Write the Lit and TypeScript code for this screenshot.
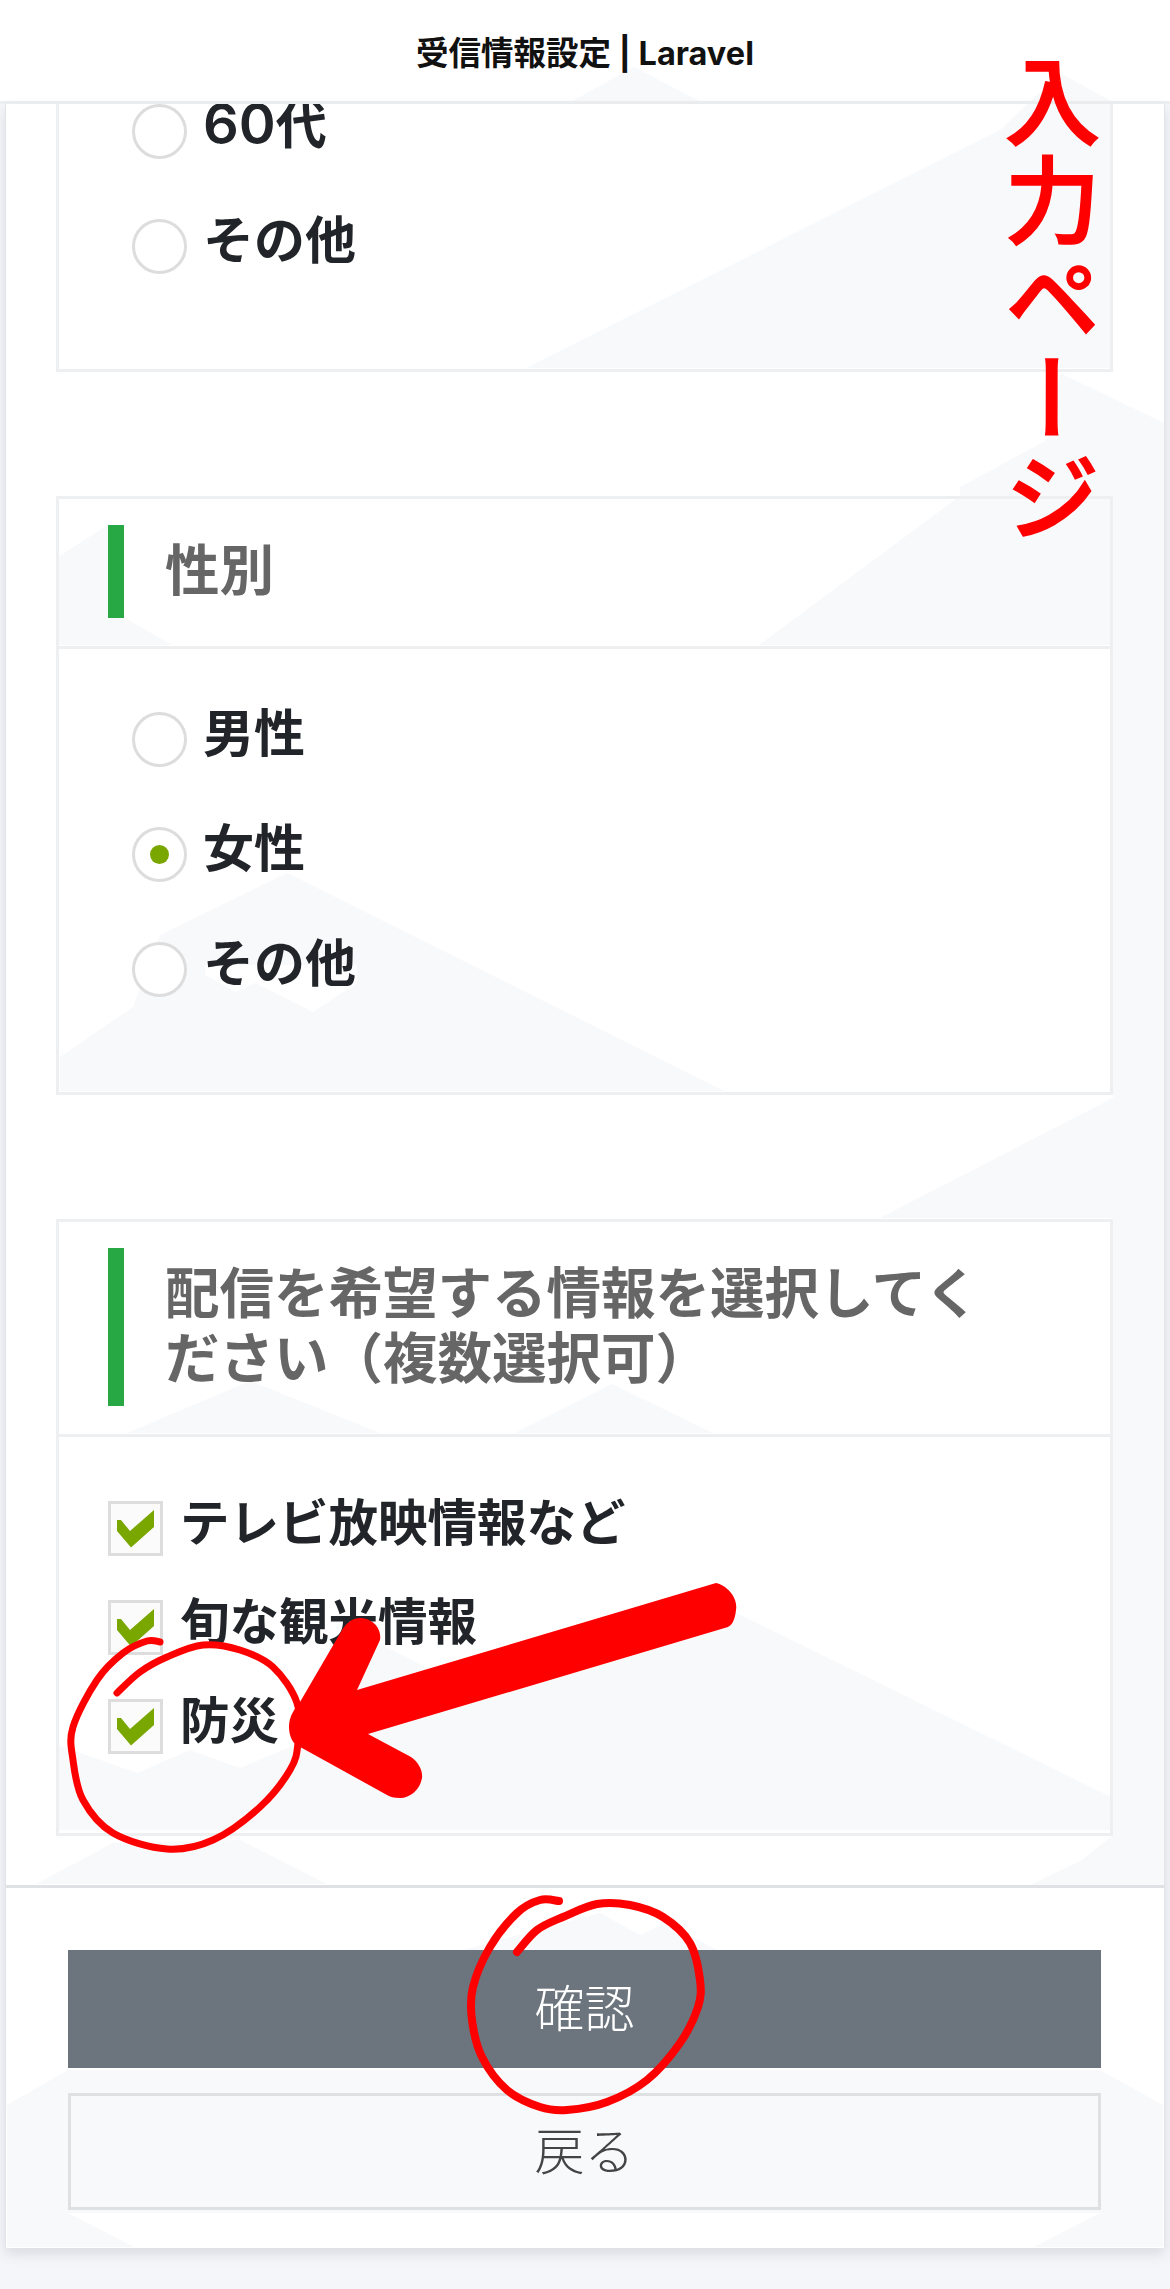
import { LitElement, html, css, svg } from "lit";
import { customElement } from "lit/decorators.js";

const SHAPES: string[] = [
  "567,104 634,67 705,104",
  "526,368 1000,130 1060,73 1113,102 1113,368",
  "960,487 1047,440 1060,373 1164,423 1164,1060 1113,1098 880,1218 1113,1218 1113,1094 1113,496 960,496",
  "759,645 960,496 1113,496 1113,645",
  "58,645 58,557 108,525 108,617 123,617 172,645",
  "60,1091 60,1057 133,1007 160,935 287,873 724,1091",
  "880,1218 1113,1098 1164,1060 1164,1885 1030,1885 1082,1860 1113,1835 1113,1218",
  "127,1433 250,1381 380,1433",
  "515,1433 612,1384 713,1433",
  "58,1830 58,1745 137,1773 190,1750 240,1768 295,1745 340,1700 379,1643 450,1680 720,1605 1111,1797 1111,1830",
  "36,1884 113,1843 240,1840 327,1884",
  "463,1950 600,1913 640,1935 667,1923 717,1950",
  "7,2105 68,2070 1100,2070 1163,2105 1163,2247 1034,2247 1100,2213 68,2213 134,2247 7,2247",
];

const HALO = "205,965 357,965 357,983 313,1012 255,983 236,992 205,975";

const RING_A: number[][] = [
  [160, 1642], [147, 1641], [123, 1653], [97, 1680], [73, 1727], [73, 1760], [83, 1800],
  [113, 1833], [167, 1849], [213, 1840], [260, 1807], [290, 1770], [298, 1743], [297, 1703],
  [273, 1667], [240, 1650], [203, 1645], [167, 1657], [140, 1672], [117, 1693],
];

const RING_B: number[][] = [
  [559, 1901], [540, 1900], [517, 1913], [490, 1947], [473, 1987], [472, 2020], [482, 2057],
  [507, 2090], [540, 2107], [567, 2110], [607, 2102], [647, 2080], [680, 2043], [698, 2007],
  [700, 1980], [690, 1943], [663, 1917], [630, 1905], [597, 1904], [563, 1917], [537, 1930], [517, 1952],
];

function smooth(pts: number[][]): string {
  let d = `M${pts[0][0]} ${pts[0][1]}`;
  for (let i = 0; i < pts.length - 1; i++) {
    const p0 = pts[Math.max(i - 1, 0)];
    const p1 = pts[i];
    const p2 = pts[i + 1];
    const p3 = pts[Math.min(i + 2, pts.length - 1)];
    const c1x = p1[0] + (p2[0] - p0[0]) / 6;
    const c1y = p1[1] + (p2[1] - p0[1]) / 6;
    const c2x = p2[0] - (p3[0] - p1[0]) / 6;
    const c2y = p2[1] - (p3[1] - p1[1]) / 6;
    d += ` C${c1x} ${c1y} ${c2x} ${c2y} ${p2[0]} ${p2[1]}`;
  }
  return d;
}

@customElement("app-root")
export class AppRoot extends LitElement {
  static styles = css`
    :host {
      display: block;
      position: relative;
      width: 1170px;
      height: 2289px;
      overflow: hidden;
      background: #f5f6fa;
      font-family: "Noto Sans CJK JP", sans-serif;
      color: #212529;
    }
    .backdrop,
    .marks {
      position: absolute;
      left: 0;
      top: 0;
      width: 1170px;
      height: 2289px;
    }
    .marks {
      z-index: 3;
      pointer-events: none;
    }
    .stack {
      position: relative;
      z-index: 1;
      display: flex;
      flex-direction: column;
    }
    header {
      height: 101px;
      box-sizing: content-box;
      border-bottom: 3px solid #eeeff1;
      display: flex;
      align-items: center;
      justify-content: center;
      font: 700 32.5px "Inter", "Noto Sans CJK JP", sans-serif;
      color: #111;
    }
    .panel {
      margin: 0 5px;
      height: 2144px;
      box-sizing: border-box;
      border: 1px solid #e3e4e8;
      border-top: 0;
      border-bottom: 0;
      box-shadow: 0 6px 12px rgba(60, 64, 80, 0.14);
      display: flex;
      flex-direction: column;
      overflow: hidden;
    }
    .main {
      padding: 0 51px 0 50px;
      display: flex;
      flex-direction: column;
      gap: 124px;
    }
    .card {
      border: 3px solid #eeeff1;
    }
    .card.cut {
      border-top: 0;
    }
    .head {
      padding: 26px 48px 28px 49px;
      border-bottom: 3px solid #eeeff1;
    }
    .title {
      border-left: 16px solid #28a745;
      padding: 9px 40px 19px 41px;
      font-size: 54.5px;
      line-height: 65px;
      font-weight: 700;
      color: #666;
    }
    .body {
      padding: 63px 73px 35px;
    }
    .cut .body {
      padding: 0 73px 35px;
    }
    .row {
      display: flex;
      gap: 16px;
      height: 115px;
    }
    .label {
      font-size: 51px;
      line-height: 44px;
      font-weight: 700;
      white-space: nowrap;
      margin-top: -4px;
    }
    .check-row .label {
      font-size: 49.5px;
      margin-top: -3px;
    }
    .num {
      font-family: "Inter", sans-serif;
      font-size: 56px;
      font-weight: 600;
    }
    .radio {
      width: 55px;
      height: 55px;
      box-sizing: border-box;
      border: 3px solid #ddd;
      border-radius: 50%;
      background: #fff;
      display: flex;
      align-items: center;
      justify-content: center;
      flex: none;
    }
    .dot {
      width: 19px;
      height: 19px;
      border-radius: 50%;
      background: #7aa600;
    }
    .checks {
      padding: 64px 48px 35px 49px;
    }
    .check-row {
      display: flex;
      gap: 17px;
      height: 99px;
    }
    .box {
      width: 55px;
      height: 55px;
      box-sizing: border-box;
      border: 3px solid #ddd;
      background: #fbfbfb;
      flex: none;
    }
    .box svg {
      display: block;
      width: 49px;
      height: 49px;
    }
    footer {
      margin-top: 49px;
      border-top: 3px solid #e0e1e4;
      padding: 62px 63px 38px 62px;
      display: flex;
      flex-direction: column;
      gap: 25px;
    }
    .btn {
      height: 118px;
      box-sizing: border-box;
      display: flex;
      align-items: center;
      justify-content: center;
      font-size: 50px;
      font-weight: 300;
      padding-bottom: 8px;
    }
    .btn.primary {
      background: #6c757d;
      color: #fff;
    }
    .btn.secondary {
      height: 117px;
      border: 3px solid #dfe0e2;
      color: #444;
    }
    .note {
      position: absolute;
      z-index: 3;
      left: 1004px;
      top: 53px;
      writing-mode: vertical-rl;
      font-size: 96px;
      line-height: 96px;
      font-weight: 500;
      -webkit-text-stroke: 1.5px #ff0000;
      letter-spacing: 3px;
      color: #ff0000;
    }
  `;

  private radio(label: unknown, on = false) {
    return html`<div class="row">
      <span class="radio">${on ? html`<span class="dot"></span>` : ""}</span>
      <span class="label">${label}</span>
    </div>`;
  }

  private check(label: string) {
    return html`<div class="check-row">
      <span class="box">
        <svg viewBox="3 3 49 49">
          <polygon fill="#7aa600" points="9,19 13,19 22,30 46,9 46,26 23,46.5 9,30"></polygon>
        </svg>
      </span>
      <span class="label">${label}</span>
    </div>`;
  }

  render() {
    return html`
      <svg class="backdrop" viewBox="0 0 1170 2289">
        <rect x="0" y="0" width="1170" height="104" fill="#fff"></rect>
        <rect x="6" y="104" width="1158" height="2144" fill="#fff"></rect>
        ${SHAPES.map((p) => svg`<polygon fill="#f8f9fb" points="${p}"></polygon>`)}
        <polygon fill="#fff" points="${HALO}"></polygon>
      </svg>
      <div class="stack">
        <header>受信情報設定 | Laravel</header>
        <div class="panel">
          <div class="main">
            <section class="card cut">
              <div class="body">
                ${this.radio(html`<span class="num">60</span>代`)}${this.radio("その他")}
              </div>
            </section>
            <section class="card">
              <div class="head"><div class="title">性別</div></div>
              <div class="body">
                ${this.radio("男性")}${this.radio("女性", true)}${this.radio("その他")}
              </div>
            </section>
            <section class="card">
              <div class="head">
                <div class="title">配信を希望する情報を選択してください（複数選択可）</div>
              </div>
              <div class="checks">
                ${this.check("テレビ放映情報など")}${this.check("旬な観光情報")}${this.check("防災")}
              </div>
            </section>
          </div>
          <footer>
            <div class="btn primary">確認</div>
            <div class="btn secondary">戻る</div>
          </footer>
        </div>
      </div>
      <div class="note">入力ページ</div>
      <svg class="marks" viewBox="0 0 1170 2289">
        <path
          fill="#ff0000"
          d="M716 1583 C728 1586 738 1598 736 1610 C735 1620 732 1625 728 1627 L368 1734 L411 1757 C418 1762 423 1770 422 1778 C420 1790 410 1798 400 1798 C394 1798 390 1797 387 1795 L302 1748 C292 1745 289 1735 289 1727 C289 1716 295 1708 300 1702 L342 1630 C347 1622 353 1618 360 1618 C372 1618 382 1628 380 1640 L357 1690 Z"
        ></path>
        <path fill="none" stroke="#ff0000" stroke-width="7" stroke-linecap="round" d="${smooth(RING_A)}"></path>
        <path fill="none" stroke="#ff0000" stroke-width="8" stroke-linecap="round" d="${smooth(RING_B)}"></path>
      </svg>
    `;
  }
}
